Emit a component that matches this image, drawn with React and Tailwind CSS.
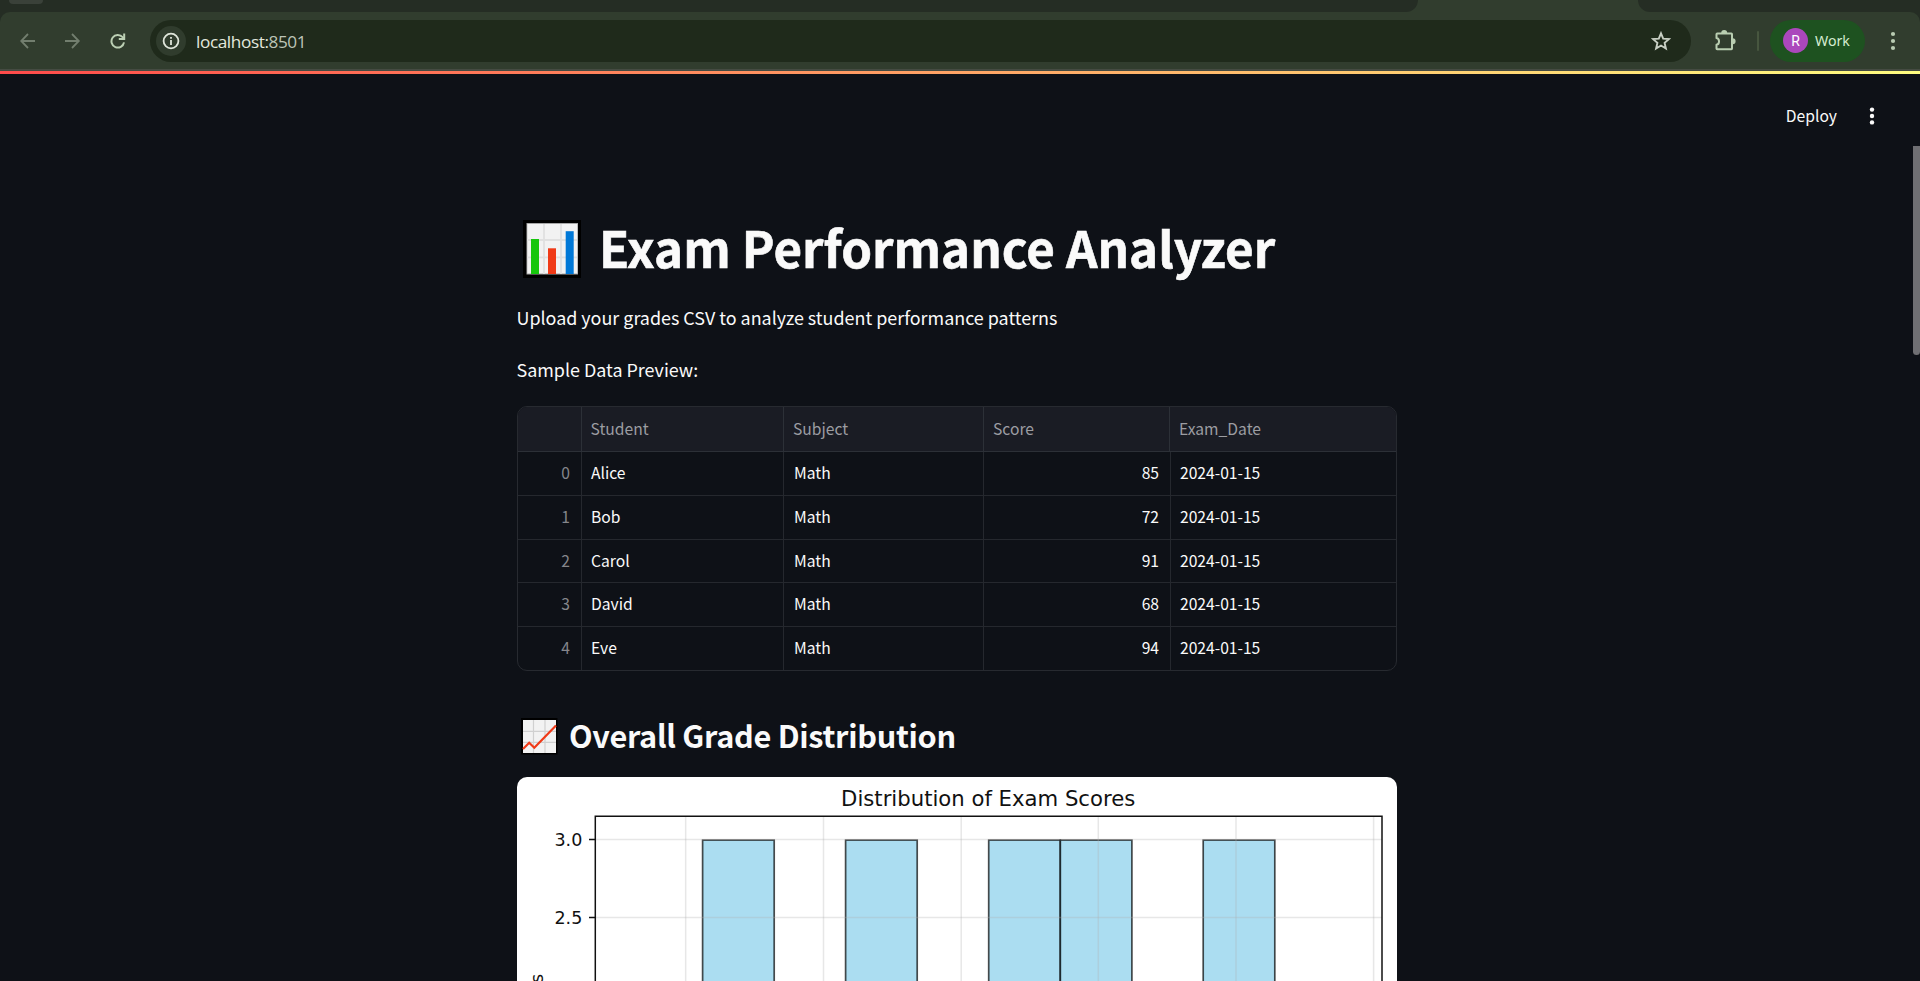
const CJK = "font-['Noto_Sans_CJK_SC','Noto_Sans',sans-serif]";

function BarEmoji() {
  return (
    <svg width="58" height="58" viewBox="0 0 58 58" className="mt-[5px] ml-[6px] shrink-0">
      <rect width="58" height="58" fill="#000" />
      <rect x="3.5" y="3" width="51.5" height="51.5" fill="#a6a6a6" />
      <rect x="4.3" y="4" width="50" height="49.5" fill="#f2f2f2" />
      <path d="M21 4v50M38 4v50M4 20h50M4 37.3h50" stroke="#e0e0e0" strokeWidth="1.8" />
      <rect x="8" y="19" width="8" height="35" fill="#16c60c" />
      <rect x="25" y="28.3" width="8" height="25.7" fill="#f03a17" />
      <rect x="42.7" y="11.2" width="8" height="42.8" fill="#0078d7" />
    </svg>
  );
}

function TrendEmoji() {
  return (
    <svg width="37" height="37" viewBox="0 0 37 37" className="ml-[4px] mt-[2px] shrink-0">
      <rect width="36.5" height="36.5" fill="#000" />
      <rect x="2" y="2" width="33" height="33" fill="#f2f2f2" />
      <path d="M12.5 2v33M24 2v33M2 13.3h33M2 24.3h33" stroke="#d0d0d0" strokeWidth="1.2" />
      <path d="M2 31L8.2 24.7L13.3 29.7L35 7.5" fill="none" stroke="#f03a17" strokeWidth="2.2" />
    </svg>
  );
}

function Dots({ color, r, step }) {
  return (
    <svg width="6" height="20" viewBox="0 0 6 20" fill={color} className="shrink-0">
      <circle cx="3" cy={10 - step} r={r} />
      <circle cx="3" cy="10" r={r} />
      <circle cx="3" cy={10 + step} r={r} />
    </svg>
  );
}

function BrowserChrome() {
  return (
    <div className="bg-[#252d24]">
      <div className="flex h-3 bg-[#313d2e]">
        <div className="w-[1418px] overflow-hidden rounded-br-[12px] bg-[#252d24] pl-[9px]">
          <div className="h-1 w-[34px] rounded-b-[10px] bg-[#3a4139]" />
        </div>
        <div className="w-[220px]" />
        <div className="flex-1 rounded-bl-[12px] bg-[#252d24]" />
      </div>
      <div className="flex h-[57px] items-center rounded-t-[10px] bg-[#313d2e] pl-5">
        <svg width="16" height="16" viewBox="0 0 16 16" fill="none" stroke="#727e6e" strokeWidth="1.8">
          <path d="M15 8H1.6M8 1L1.2 8L8 15" />
        </svg>
        <svg width="16" height="16" viewBox="0 0 16 16" fill="none" stroke="#727e6e" strokeWidth="1.8" className="ml-[29px]">
          <path d="M0 8H13.4M7 1L13.8 8L7 15" />
        </svg>
        <svg width="16" height="16" viewBox="0 0 16 16" fill="none" stroke="#bcd0b4" strokeWidth="2" className="ml-[29px]">
          <path d="M14 9.3A6.3 6.3 0 1 1 12.6 4.2L14 5.8" />
          <path d="M14.2 0.6V6H8.8" />
        </svg>
        <div className="mt-px ml-6 flex h-[42px] w-[1541px] items-center rounded-full bg-[#1f2a1b] pr-[20px] pl-[6px]">
          <div className="flex h-[30px] w-[30px] items-center justify-center rounded-full bg-[#303c2d]">
            <svg width="18" height="18" viewBox="0 0 18 18" fill="none" stroke="#dfe5da" strokeWidth="1.8">
              <circle cx="9" cy="9" r="7.4" />
              <path d="M9 8V13M9 4.9V6.7" />
            </svg>
          </div>
          <div className="ml-[10px] pt-px font-['Open_Sans',sans-serif] text-[17.2px] leading-6 tracking-[-0.4px] text-[#e3e8de]">
            localhost:<span className="text-[#bcc4b7]">8501</span>
          </div>
          <svg width="20" height="20" viewBox="0 0 20 20" fill="none" stroke="#c8cfc4" strokeWidth="1.9" className="ml-auto">
            <path d="M10 2.3L12.2 7.6L17.9 8.1L13.6 11.9L14.9 17.5L10 14.5L5.1 17.5L6.4 11.9L2.1 8.1L7.8 7.6Z" />
          </svg>
        </div>
        <svg width="21" height="21" viewBox="0 0 21 21" fill="none" stroke="#b9ceb1" strokeWidth="2" strokeLinejoin="round" className="ml-[24px] shrink-0">
          <path d="M2.2 3.6H16.4Q17 3.6 17 4.2V18.6Q17 19.3 16.4 19.3H2.2Q1.5 19.3 1.5 18.6V14.8C4.9 14 4.9 8.8 1.5 8V4.2Q1.5 3.6 2.2 3.6Z" />
          <path d="M6.2 3A3 3 0 0 1 12.2 3ZM17.6 8.3A3 3 0 0 1 17.6 14.3Z" fill="#b9ceb1" stroke="none" />
        </svg>
        <div className="ml-[21px] h-5 w-[2px] rounded bg-[#47563f]" />
        <div className="ml-[11px] flex h-[42px] w-[95px] items-center rounded-full bg-[#1e5220] pl-[13px]">
          <div className="flex h-[25px] w-[25px] items-center justify-center rounded-full bg-[#ab47bc] font-[Roboto,sans-serif] text-[14px] leading-none text-white">R</div>
          <div className="ml-[7px] font-['Noto_Sans',sans-serif] text-[14.2px] leading-5 text-[#d5ecd0]">Work</div>
        </div>
        <div className="ml-[25px]">
          <Dots color="#b9ccb2" r={2.1} step={7} />
        </div>
      </div>
      <div className="h-[2px] bg-[#454b42]" />
    </div>
  );
}

const COLS = ["Student", "Subject", "Score", "Exam_Date"];
const ROWS = [
  ["Alice", 85, "h-[44px]"],
  ["Bob", 72, "h-[44px]"],
  ["Carol", 91, "h-[43px]"],
  ["David", 68, "h-[44px]"],
  ["Eve", 94, "h-[43px]"],
];

function DataTable() {
  return (
    <div className="mt-[22px] h-[265px] overflow-hidden rounded-[10px] border border-[#272a30] text-[15.65px] leading-[22px] text-[#fafafa]">
      <div className="flex h-[45px] border-b border-[#2c3037] bg-[#1a1c24] text-[#9c9da2]">
        <div className="w-[64px] border-r border-[#2c3037]" />
        <div className="flex w-[202px] items-center border-r border-[#2c3037] pl-[8.5px]">{COLS[0]}</div>
        <div className="flex w-[200px] items-center border-r border-[#2c3037] pl-[9px]">{COLS[1]}</div>
        <div className="flex w-[186px] items-center border-r border-[#2c3037] pl-[9px]">{COLS[2]}</div>
        <div className="flex flex-1 items-center pl-[9px]">{COLS[3]}</div>
      </div>
      {ROWS.map(([name, score, h], i) => (
        <div key={name} className={`flex border-[#25282e] ${h} ${i < 4 ? "border-b" : ""}`}>
          <div className="flex w-[64px] items-center justify-end border-r border-[#25282e] pr-[11px] pb-px text-[#85868b]">{i}</div>
          <div className="flex w-[202px] items-center border-r border-[#25282e] pb-px pl-[9px]">{name}</div>
          <div className="flex w-[200px] items-center border-r border-[#25282e] pb-px pl-[10px]">Math</div>
          <div className="flex w-[187px] items-center justify-end border-r border-[#25282e] pr-[11px] pb-px">{score}</div>
          <div className="flex flex-1 items-center pb-px pl-[9px]">2024-01-15</div>
        </div>
      ))}
    </div>
  );
}

const BARS = [185.6, 328.6, 471.7, 543.3, 686.2];
const GRID_X = [168.7, 306.5, 444.2, 581.3, 719, 856.6];
const TICKS = [
  ["3.0", 62.6],
  ["2.5", 140.4],
];

function Histogram() {
  return (
    <div className="mt-[22px] h-[204px] overflow-hidden rounded-t-[10px] bg-white">
      <svg width="880" height="204" viewBox="0 0 880 204" fontFamily="'DejaVu Sans', sans-serif" className="block">
        {BARS.map((x) => (
          <rect key={x} x={x} y="63.1" width="71.6" height="200" fill="#87ceeb" stroke="#000" strokeWidth="1.7" fillOpacity="0.7" strokeOpacity="0.7" />
        ))}
        <g stroke="#b0b0b0" strokeOpacity="0.3" strokeWidth="1.5">
          {GRID_X.map((x) => (
            <path key={x} d={`M${x} 39V204`} />
          ))}
          {TICKS.map(([t, y]) => (
            <path key={t} d={`M78 ${y}H865`} />
          ))}
        </g>
        <path d="M78.3 204V39.3H865V204" fill="none" stroke="#111" strokeWidth="1.5" />
        {TICKS.map(([t, y]) => (
          <g key={t}>
            <path d={`M72 ${y}H78.3`} stroke="#111" strokeWidth="1.5" />
            <text x="65.3" y={y + 6.7} fontSize="17.5" textAnchor="end" fill="#111">{t}</text>
          </g>
        ))}
        <text x="471.2" y="29" fontSize="21.2" textAnchor="middle" fill="#111">Distribution of Exam Scores</text>
        <text transform="translate(26 206) rotate(-90)" fontSize="17.5" fill="#111">s</text>
      </svg>
    </div>
  );
}

export default function App() {
  return (
    <div className="flex h-[981px] w-[1920px] flex-col overflow-hidden bg-[#0e1117]">
      <BrowserChrome />
      <div className="h-[3px] shrink-0 bg-linear-to-r/srgb from-[#ff4b4b] to-[#fffd80]" />
      <div className={`flex flex-1 text-[#fafafa] ${CJK}`}>
        <div className="flex-1">
          <div className="flex h-[84px] items-center justify-end pr-[38px]">
            <div className="text-[15.65px] leading-6">Deploy</div>
            <div className="ml-[32px]">
              <Dots color="#fafafa" r={2.2} step={6.4} />
            </div>
          </div>
          <main className="ml-[517px] w-[880px] pt-[55px]">
            <h1 className="flex h-[67px] items-center gap-[18px] text-[49.3px] leading-[67px] font-bold tracking-[-0.03px] [-webkit-text-stroke:0.6px_#fafafa]">
              <BarEmoji />
              Exam Performance Analyzer
            </h1>
            <p className="-ml-[0.5px] mt-[22px] text-[17.92px] leading-[30px]">Upload your grades CSV to analyze student performance patterns</p>
            <p className="-ml-[0.5px] mt-[22px] text-[17.92px] leading-[30px]">Sample Data Preview:</p>
            <DataTable />
            <h2 className="mt-[44px] flex h-[40px] items-center gap-[11px] text-[30.7px] leading-[40px] font-bold tracking-[-0.3px]">
              <TrendEmoji />
              Overall Grade Distribution
            </h2>
            <Histogram />
          </main>
        </div>
        <div className="w-[7px] pt-[72px]">
          <div className="h-[209px] rounded-b-[4px] bg-[#6f6f73]" />
        </div>
      </div>
    </div>
  );
}
